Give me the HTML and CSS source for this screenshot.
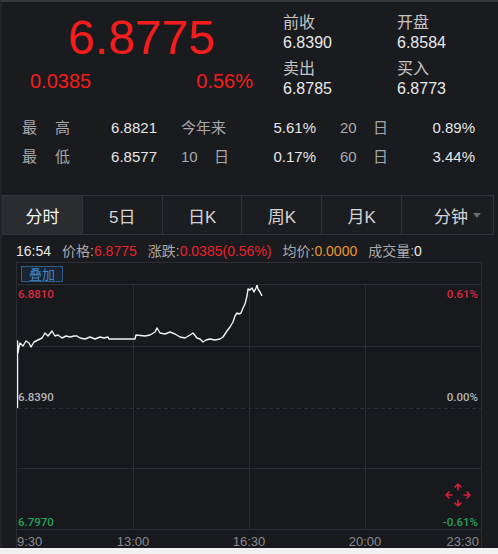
FILE: index.html
```html
<!DOCTYPE html>
<html lang="zh-CN">
<head>
  <meta charset="UTF-8">
  <meta name="viewport" content="width=device-width, initial-scale=1.0">
  <title>6.8775 分时</title>
  <link rel="stylesheet" href="styles.css">
</head>
<body>
  <div class="screen">

    <section class="quote">
      <div class="price-block">
        <div class="price">6.8775</div>
        <div class="change"><span>0.0385</span><span>0.56%</span></div>
      </div>
      <div class="brief">
        <div class="cell"><div class="label">前收</div><div class="value">6.8390</div></div>
        <div class="cell"><div class="label">开盘</div><div class="value">6.8584</div></div>
        <div class="cell"><div class="label">卖出</div><div class="value">6.8785</div></div>
        <div class="cell"><div class="label">买入</div><div class="value">6.8773</div></div>
      </div>
    </section>

    <section class="stats">
      <div class="stat"><span class="name"><i>最</i>高</span><span class="num">6.8821</span></div>
      <div class="stat"><span class="name">今年来</span><span class="num">5.61%</span></div>
      <div class="stat"><span class="name"><i>20</i>日</span><span class="num">0.89%</span></div>
      <div class="stat"><span class="name"><i>最</i>低</span><span class="num">6.8577</span></div>
      <div class="stat"><span class="name"><i>10</i>日</span><span class="num">0.17%</span></div>
      <div class="stat"><span class="name"><i>60</i>日</span><span class="num">3.44%</span></div>
    </section>

    <nav class="tabs">
      <a class="active">分时</a>
      <a>5日</a>
      <a>日K</a>
      <a>周K</a>
      <a>月K</a>
      <a class="more">分钟<span class="caret"></span></a>
    </nav>

    <div class="ticker">
      <span class="time">16:54</span>
      <span>价格:<em class="up">6.8775</em></span>
      <span>涨跌:<em class="up">0.0385(0.56%)</em></span>
      <span>均价:<em class="avg">0.0000</em></span>
      <span>成交量:<em>0</em></span>
    </div>

    <div class="chart">
      <div class="chart-head"><span class="overlay-btn">叠加</span></div>
      <div class="plot">
        <svg class="lines" width="464" height="244" viewBox="17 285 464 244">
          <g stroke="#2b2c31" stroke-width="1">
            <line x1="133.5" y1="285" x2="133.5" y2="529"/>
            <line x1="249.5" y1="285" x2="249.5" y2="529"/>
            <line x1="365.5" y1="285" x2="365.5" y2="529"/>
            <line x1="17" y1="346.5" x2="481" y2="346.5"/>
            <line x1="17" y1="408.5" x2="481" y2="408.5" stroke-dasharray="4 3"/>
            <line x1="17" y1="468.5" x2="481" y2="468.5"/>
          </g>
          <polyline fill="none" stroke="#f2f2f2" stroke-width="1.4" stroke-linejoin="round"
            points="17.5,408 17.5,341 18,353 19,347 20,343 23,346 26,341 29,343 31,347 34,342 38,340 42,338 45,333 48,336 52,331 55,336 58,335 62,338 66,336 70,337 74,336 77,336 80,338 85,339 90,337 95,339 100,337 104,338 108,337 109,339 135,339 136,335 145,336 150,335 155,332 157,328 160,333 165,334 170,332 175,334 180,337 185,338 190,335 193,333 197,338 200,339 203,342 206,340 210,339 215,340 220,339 223,337 227,331 230,327 233,322 235,316 237,313 239,314 241,313 243,308 245,304 247,296 248,289 250,290 252,288 254,292 256,288 257,285 258,289 260,292 262,296"/>
        </svg>
        <span class="axis hi left">6.8810</span>
        <span class="axis hi right">0.61%</span>
        <span class="axis mid left">6.8390</span>
        <span class="axis mid right">0.00%</span>
        <span class="axis lo left">6.7970</span>
        <span class="axis lo right">-0.61%</span>
        <svg class="move-icon" width="26" height="26" viewBox="0 0 26 26">
          <g fill="none" stroke="#d4213d" stroke-width="1.6" stroke-linecap="round" stroke-linejoin="round">
            <path d="M13 2v6M10 5l3-3 3 3"/>
            <path d="M13 18v6M10 21l3 3 3-3"/>
            <path d="M1 13h6M4 10l-3 3 3 3"/>
            <path d="M19 13h6M22 10l3 3-3 3"/>
          </g>
        </svg>
      </div>
      <div class="times">
        <span class="t-first">9:30</span>
        <span class="t-mid" style="left: 25%">13:00</span>
        <span class="t-mid" style="left: 50%">16:30</span>
        <span class="t-mid" style="left: 75%">20:00</span>
        <span class="t-last">23:30</span>
      </div>
    </div>

  </div>
</body>
</html>
```

FILE: styles.css
```css
body {
margin: 0;
background-color: #f0f0f0;
font-family: "Liberation Sans", "Noto Sans CJK SC", sans-serif;
}

.screen {
width: 498px;
height: 548px;
box-sizing: border-box;
background-color: #1a1b1f;
border-top: 2px solid #37383c;
border-left: 2px solid #232428;
overflow: hidden;
}

/* price header */
.quote {
display: flex;
height: 100px;
}

.price-block {
flex-shrink: 0;
margin-left: 28px;
width: 223px;
padding-top: 12px;
color: #f51c1c;
}

.price {
font-size: 48px;
line-height: 48px;
text-align: center;
}

.change {
display: flex;
justify-content: space-between;
margin-top: 9px;
font-size: 20px;
line-height: 20px;
}

.brief {
flex-shrink: 0;
display: grid;
grid-template-columns: 114px 100px;
margin-left: 30px;
padding-top: 8px;
}

.brief .label {
font-family: "Noto Sans CJK SC", sans-serif;
font-size: 16px;
line-height: 22px;
color: #c4c4c6;
}

.brief .value {
font-size: 16px;
line-height: 22px;
color: #e8e8e8;
}

/* high / low stats */
.stats {
display: grid;
grid-template-columns: repeat(3, 135px);
column-gap: 24px;
padding: 11px 0 24px 20px;
font-size: 15px;
line-height: 29px;
}

.stat {
display: flex;
justify-content: space-between;
}

.stat .name {
color: #a9a9ac;
font-family: "Liberation Sans", "Noto Sans CJK SC", sans-serif;
}

.stat .name i {
display: inline-block;
width: 33px;
font-style: normal;
}

.stat .num {
color: #e6e6e6;
}

/* period tabs */
.tabs {
display: flex;
width: 492px;
height: 40px;
box-sizing: border-box;
border: 1px solid #323338;
background-color: #1c1d21;
}

.tabs a {
flex: 1;
display: flex;
align-items: center;
justify-content: center;
border-left: 1px solid #323338;
font-family: "Liberation Sans", "Noto Sans CJK SC", sans-serif;
font-size: 17px;
color: #d4d4d6;
}

.tabs a:first-child {
border-left: none;
}

.tabs a.active {
background-color: #2b2c30;
color: #f4f4f4;
}

.tabs .more {
justify-content: flex-end;
padding-right: 12px;
}

.caret {
margin-left: 5px;
border-left: 4px solid transparent;
border-right: 4px solid transparent;
border-top: 5px solid #6a6b70;
}

/* live ticker line */
.ticker {
display: flex;
gap: 11px;
height: 27px;
box-sizing: border-box;
padding: 6px 0 0 14px;
font-size: 14px;
line-height: 21px;
color: #a9a9ac;
}

.ticker .time {
color: #e8e8e8;
}

.ticker em {
font-style: normal;
color: #e8e8e8;
}

.ticker em.up {
color: #e8222c;
}

.ticker em.avg {
color: #e8962b;
}

/* intraday chart */
.chart {
margin-left: 14px;
width: 466px;
box-sizing: border-box;
border: 1px solid #2d2e33;
border-bottom: none;
background-color: #18191d;
}

.chart-head {
height: 21px;
box-sizing: border-box;
padding: 2px 0 0 4px;
}

.overlay-btn {
display: inline-block;
width: 42px;
height: 16px;
box-sizing: border-box;
border: 1px solid #2f5d8c;
background-color: #1b2430;
color: #3f86c9;
font-family: "Noto Sans CJK SC", sans-serif;
font-size: 13px;
line-height: 14px;
text-align: center;
}

.plot {
position: relative;
height: 244px;
border-top: 1px solid #2d2e33;
border-bottom: 1px solid #2d2e33;
}

.lines {
display: block;
}

.axis {
position: absolute;
font-family: Roboto, "Liberation Sans", sans-serif;
font-weight: 500;
font-size: 11.5px;
line-height: 12px;
}

.axis.left {
left: 1px;
}

.axis.right {
right: 3px;
}

.axis.hi {
top: 3px;
color: #dc2a40;
}

.axis.mid {
top: 106px;
color: #b4b4b8;
}

.axis.lo {
top: 231px;
color: #27a158;
}

.move-icon {
position: absolute;
left: 428px;
top: 197px;
}

.times {
position: relative;
height: 18px;
font-size: 13px;
line-height: 13px;
color: #8a8a8e;
}

.times span {
position: absolute;
top: 5px;
}

.times .t-first {
left: 0;
}

.times .t-mid {
transform: translateX(-50%);
}

.times .t-last {
right: 2px;
}
```
